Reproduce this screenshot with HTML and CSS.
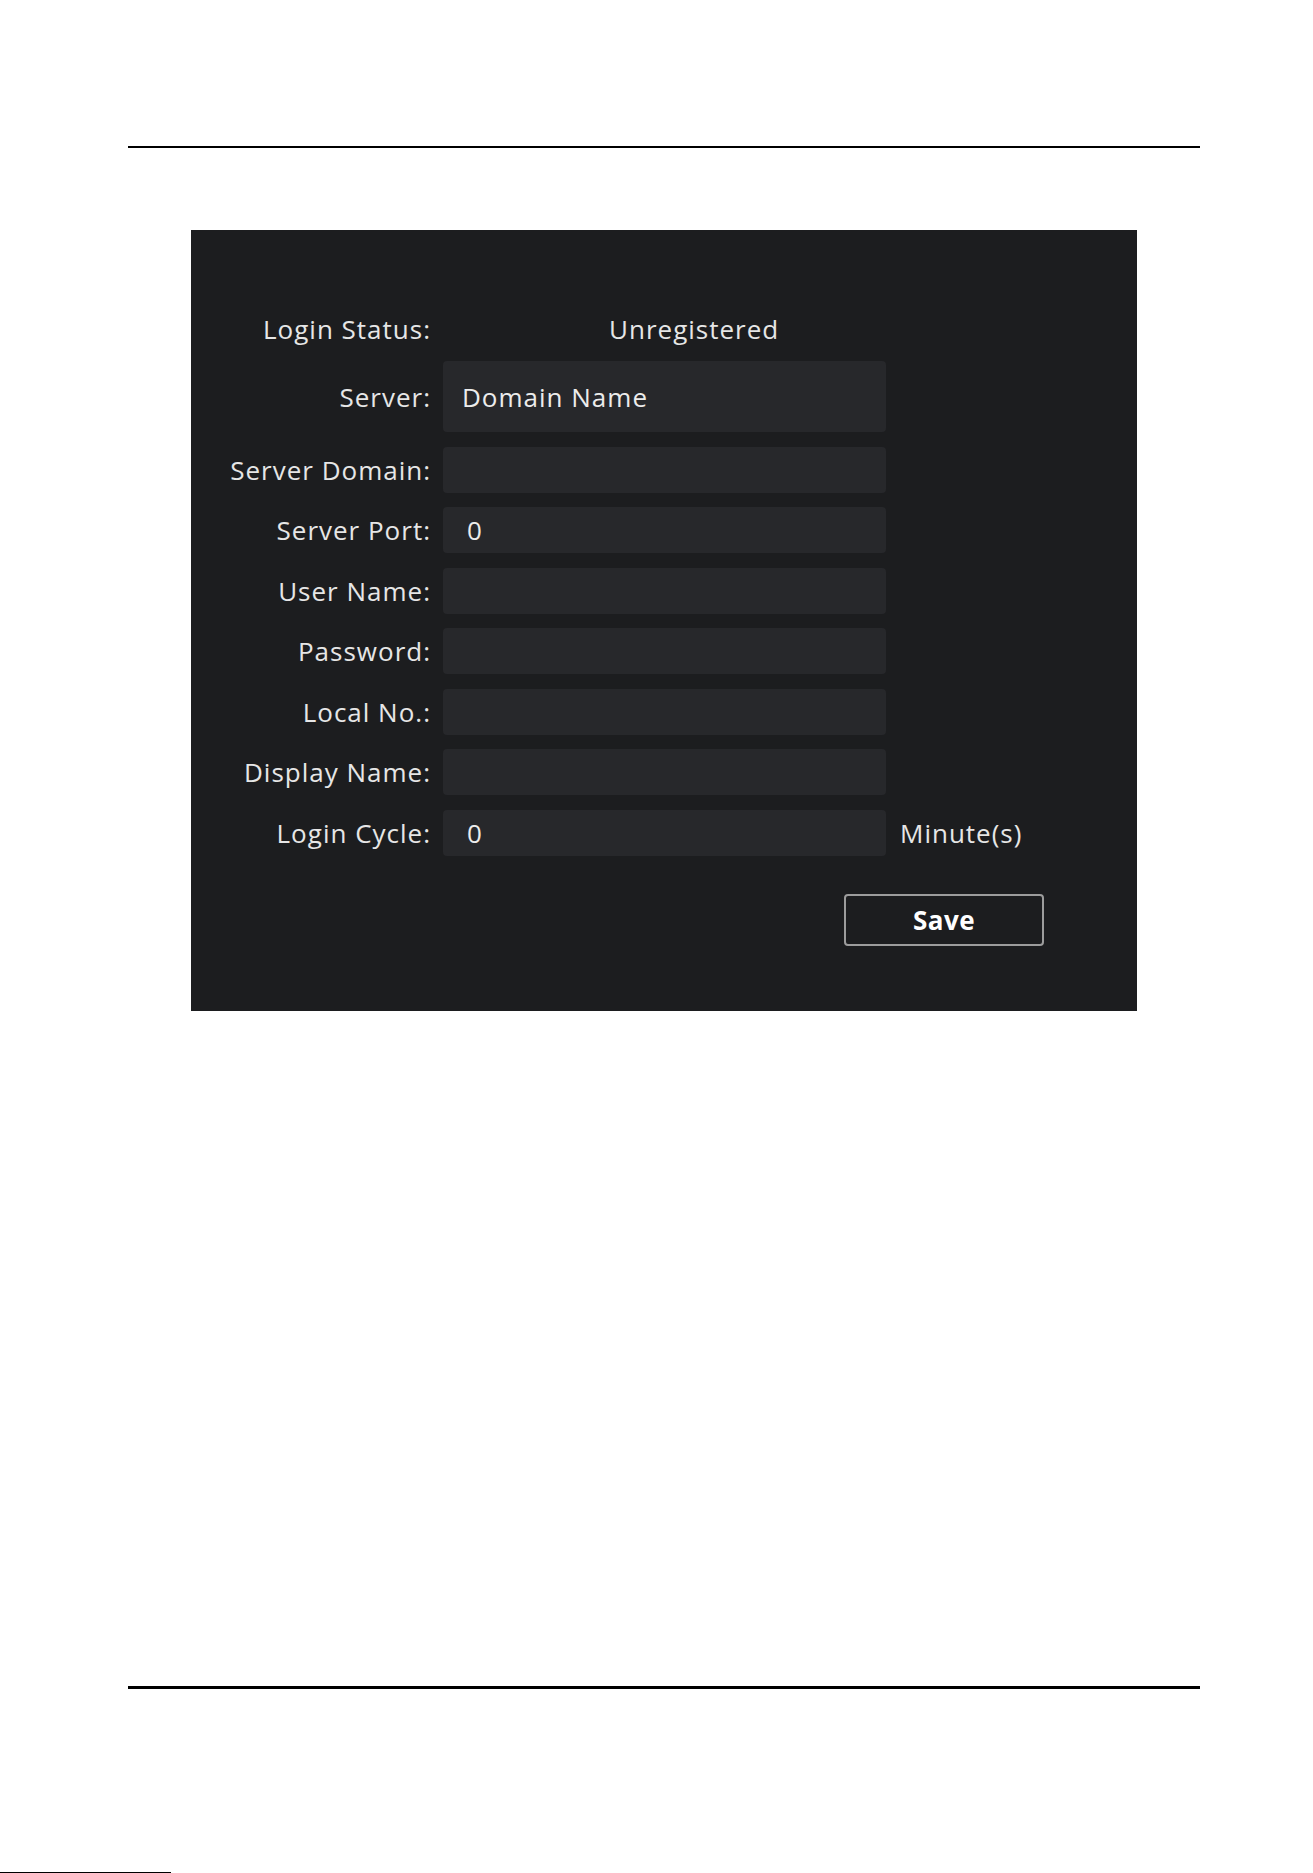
FILE: index.html
```html
<!DOCTYPE html>
<html lang="en">
<head>
    <meta charset="UTF-8">
    <title>SIP Settings</title>
    <link rel="stylesheet" href="styles.css">
</head>
<body>
<div class="page">
    <div class="rule rule-top"></div>
    <section class="panel">
        <form class="sipForm">
            <label class="lbl">Login Status:</label>
            <span class="status">Unregistered</span>
            <span></span>

            <label class="lbl">Server:</label>
            <div class="field field-big">Domain Name</div>
            <span></span>

            <label class="lbl">Server Domain:</label>
            <input class="field" type="text" value="">
            <span></span>

            <label class="lbl">Server Port:</label>
            <input class="field" type="text" value="0">
            <span></span>

            <label class="lbl">User Name:</label>
            <input class="field" type="text" value="">
            <span></span>

            <label class="lbl">Password:</label>
            <input class="field" type="password" value="">
            <span></span>

            <label class="lbl">Local No.:</label>
            <input class="field" type="text" value="">
            <span></span>

            <label class="lbl">Display Name:</label>
            <input class="field" type="text" value="">
            <span></span>

            <label class="lbl">Login Cycle:</label>
            <input class="field" type="text" value="0">
            <span class="unit">Minute(s)</span>
        </form>
        <p class="btnRow">
            <button class="saveBtn" type="button">Save</button>
        </p>
    </section>
    <div class="rule rule-bottom"></div>
</div>
<div class="edge"></div>
</body>
</html>
```

FILE: styles.css
```css
body,p,form,input,button{margin: 0;padding: 0;}
body{ background: #fff; font-family: "Open Sans", "Liberation Sans", sans-serif; }
.page{ width: 1072px; margin-left: 128px; padding-top: 146px; }
.rule{ background: #000; }
.rule-top{ height: 2px; }
.rule-bottom{ height: 3px; margin-top: 675px; }
.panel{ width: 946px; height: 781px; margin: 82px 0 0 63px; box-sizing: border-box; padding-top: 81px;
        background: #1c1d1f; color: #e6e6e6; font-size: 26px; letter-spacing: 1px; }
.sipForm{ display: grid; grid-template-columns: 240px 443px auto; grid-template-rows: 35.5px 71px repeat(7, 46px);
          column-gap: 12px; row-gap: 14.5px; align-items: center; }
.lbl{ text-align: right; white-space: nowrap; }
.status{ padding-left: 166px; white-space: nowrap; }
.field{ display: flex; align-items: center; box-sizing: border-box; height: 100%; width: 100%; padding: 0 0 0 24px;
        border: none; border-radius: 4px; background: #27282b; color: #ececec; font: inherit; letter-spacing: inherit; outline: none; }
.field-big{ padding-left: 19px; }
.unit{ padding-left: 2px; white-space: nowrap; }
.btnRow{ display: flex; justify-content: flex-end; padding: 38px 93px 0 0; }
.saveBtn{ width: 200px; height: 52px; border: 2px solid #9c9c9c; border-radius: 4px; background: #1c1d1f;
          color: #fff; font: bold 26px "Open Sans", "Liberation Sans", sans-serif; letter-spacing: 0.5px; }
.edge{ position: absolute; left: 0; top: 1872px; width: 171px; height: 1px; background: #000; }
```
